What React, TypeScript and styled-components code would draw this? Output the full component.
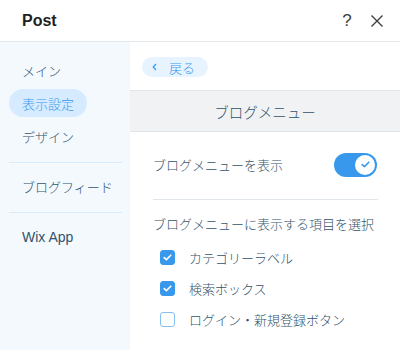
import React, { useState } from "react";
import styled, { createGlobalStyle } from "styled-components";

const GlobalStyle = createGlobalStyle`
  html, body { margin: 0; padding: 0; background: #fff; }
  body {
    font-family: "Noto Sans CJK JP", "Liberation Sans", sans-serif;
    color: #32536a;
  }
`;

const Frame = styled.div`
  width: 400px;
  height: 350px;
  display: flex;
  flex-direction: column;
  overflow: hidden;
`;

const Header = styled.div`
  height: 42px;
  flex-shrink: 0;
  display: flex;
  align-items: center;
  padding: 0 12px 0 22px;
  border-bottom: 1px solid #e3e6ea;
  box-sizing: border-box;
`;

const Title = styled.div`
  flex: 1;
  font-family: "Liberation Sans", Arial, sans-serif;
  font-weight: bold;
  font-size: 16px;
  color: #1f1f1f;
`;

const HeaderIcon = styled.button`
  border: none;
  background: none;
  padding: 0;
  width: 22px;
  height: 22px;
  margin-left: 8px;
  display: flex;
  align-items: center;
  justify-content: center;
  color: #3a3a3a;
  font-family: "Liberation Sans", Arial, sans-serif;
  font-size: 17px;
  cursor: pointer;
`;

const Body = styled.div`
  flex: 1;
  display: flex;
  min-height: 0;
`;

const Sidebar = styled.div`
  width: 130px;
  flex-shrink: 0;
  background: #f4f9fe;
  padding: 14px 8px 0 9px;
  box-sizing: border-box;
  display: flex;
  flex-direction: column;
`;

const NavItem = styled.div<{ $active?: boolean }>`
  height: 28px;
  display: flex;
  align-items: center;
  padding: 0 13px;
  margin-bottom: 5px;
  border-radius: 14px;
  align-self: flex-start;
  white-space: nowrap;
  font-size: 13px;
  font-weight: 300;
  color: ${(p) => (p.$active ? "#3899ec" : "#32536a")};
  background: ${(p) => (p.$active ? "#d6ebff" : "transparent")};
  cursor: pointer;
`;

const NavDivider = styled.div<{ $after?: number }>`
  height: 1px;
  background: #d9ecfd;
  margin: 7px 0 ${(p) => p.$after ?? 9}px 0;
`;

const NavLatin = styled.span`
  font-family: "Liberation Sans", Arial, sans-serif;
  font-size: 14px;
`;

const Panel = styled.div`
  flex: 1;
  display: flex;
  flex-direction: column;
  background: #fff;
`;

const BackRow = styled.div`
  height: 48px;
  display: flex;
  align-items: center;
  padding-left: 12px;
  box-sizing: border-box;
`;

const BackButton = styled.button`
  height: 20px;
  border: none;
  border-radius: 10px;
  background: #e7f3ff;
  color: #3899ec;
  font-family: inherit;
  font-size: 13px;
  font-weight: 300;
  padding: 0 13px 0 10px;
  display: flex;
  align-items: center;
  gap: 12px;
  cursor: pointer;
  margin-top: 2px;
`;

const SectionTitle = styled.div`
  height: 42px;
  box-sizing: border-box;
  border-top: 1px solid #dfe5eb;
  border-bottom: 1px solid #dfe5eb;
  background: #f0f2f4;
  display: flex;
  align-items: center;
  justify-content: center;
  font-size: 14.5px;
  font-weight: 300;
  color: #32536a;
`;

const Content = styled.div`
  padding: 0 22px 0 23px;
`;

const ToggleRow = styled.div`
  height: 68px;
  display: flex;
  align-items: center;
  justify-content: space-between;
  border-bottom: 1px solid #dfe5eb;
  font-size: 13px;
  font-weight: 300;
  padding-bottom: 2px;
  box-sizing: border-box;
  white-space: nowrap;
`;

const Track = styled.div<{ $on: boolean }>`
  width: 43px;
  height: 24px;
  border-radius: 12px;
  background: ${(p) => (p.$on ? "#3899ec" : "#c1d6e8")};
  position: relative;
  cursor: pointer;
  margin-right: 1px;
`;

const Thumb = styled.div<{ $on: boolean }>`
  position: absolute;
  top: 2px;
  left: ${(p) => (p.$on ? "21px" : "2px")};
  width: 20px;
  height: 20px;
  border-radius: 50%;
  background: #fff;
  display: flex;
  align-items: center;
  justify-content: center;
`;

const GroupLabel = styled.div`
  font-size: 13px;
  font-weight: 300;
  line-height: 19px;
  white-space: nowrap;
  margin: 14px 0 14px;
`;

const CheckList = styled.div`
  display: flex;
  flex-direction: column;
  gap: 10px;
  padding-left: 7px;
`;

const CheckRow = styled.label`
  display: flex;
  align-items: center;
  gap: 14px;
  font-size: 13px;
  font-weight: 300;
  height: 21px;
  white-space: nowrap;
  cursor: pointer;
`;

const Box = styled.span<{ $on: boolean }>`
  width: 15px;
  height: 15px;
  box-sizing: border-box;
  border-radius: 3px;
  background: ${(p) => (p.$on ? "#3899ec" : "#fff")};
  border: 1px solid ${(p) => (p.$on ? "#3899ec" : "#86c1f2")};
  display: flex;
  align-items: center;
  justify-content: center;
`;

const Check = ({ color }: { color: string }) => (
  <svg width="9" height="7" viewBox="0 0 9 7">
    <path d="M1.2 3.6 L3.4 5.6 L7.8 1.2" fill="none" stroke={color} strokeWidth="1.6" strokeLinecap="round" strokeLinejoin="round" />
  </svg>
);

export default function App() {
  const [shown, setShown] = useState(true);
  const [items, setItems] = useState([
    { label: "カテゴリーラベル", on: true },
    { label: "検索ボックス", on: true },
    { label: "ログイン・新規登録ボタン", on: false },
  ]);

  return (
    <Frame>
      <GlobalStyle />
      <Header>
        <Title>Post</Title>
        <HeaderIcon>?</HeaderIcon>
        <HeaderIcon>
          <svg width="14" height="14" viewBox="0 0 14 14">
            <path d="M1.5 1.5 L12.5 12.5 M12.5 1.5 L1.5 12.5" stroke="#3a3a3a" strokeWidth="1.3" />
          </svg>
        </HeaderIcon>
      </Header>
      <Body>
        <Sidebar>
          <NavItem>メイン</NavItem>
          <NavItem $active>表示設定</NavItem>
          <NavItem>デザイン</NavItem>
          <NavDivider />
          <NavItem>ブログフィード</NavItem>
          <NavDivider $after={10} />
          <NavItem><NavLatin>Wix App</NavLatin></NavItem>
        </Sidebar>
        <Panel>
          <BackRow>
            <BackButton>
              <svg width="5" height="8" viewBox="0 0 5 8">
                <path d="M4 1 L1.2 4 L4 7" fill="none" stroke="#3899ec" strokeWidth="1.2" />
              </svg>
              戻る
            </BackButton>
          </BackRow>
          <SectionTitle>ブログメニュー</SectionTitle>
          <Content>
            <ToggleRow>
              <span>ブログメニューを表示</span>
              <Track $on={shown} onClick={() => setShown(!shown)}>
                <Thumb $on={shown}>{shown && <Check color="#3899ec" />}</Thumb>
              </Track>
            </ToggleRow>
            <GroupLabel>ブログメニューに表示する項目を選択</GroupLabel>
            <CheckList>
              {items.map((it, i) => (
                <CheckRow
                  key={it.label}
                  onClick={() =>
                    setItems(items.map((x, j) => (j === i ? { ...x, on: !x.on } : x)))
                  }
                >
                  <Box $on={it.on}>{it.on && <Check color="#fff" />}</Box>
                  {it.label}
                </CheckRow>
              ))}
            </CheckList>
          </Content>
        </Panel>
      </Body>
    </Frame>
  );
}
